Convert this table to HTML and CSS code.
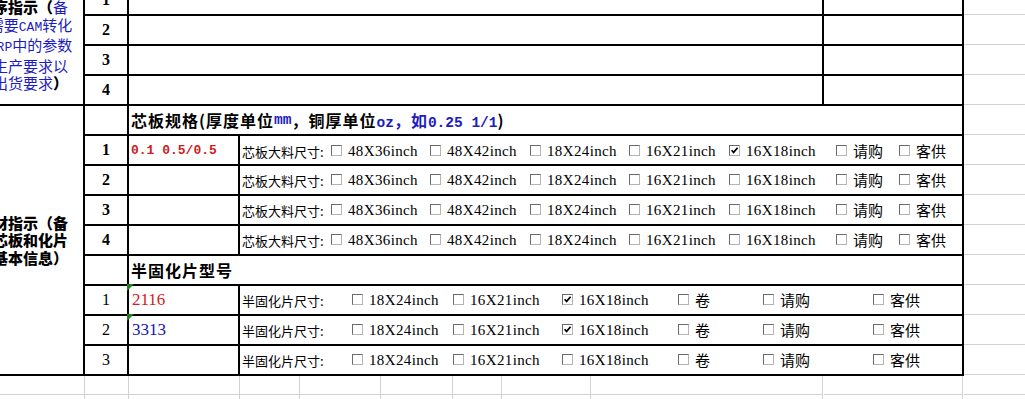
FILE: index.html
```html
<!DOCTYPE html>
<html lang="zh-CN">
<head>
<meta charset="utf-8">
<title>工序指示</title>
<link rel="stylesheet" href="styles.css">
</head>
<body>
<div class="sheet">
  <!-- rows 1-4 -->
  <div class="cell a a-top"><div class="note">
    <b>序指示（</b><span class="bl">备</span><br>
    <span class="bl">需要<span class="asc">CAM</span>转化</span><br>
    <span class="bl"><span class="asc">ERP</span>中的参数</span><br>
    <span class="bl">生产要求以</span><br>
    <span class="bl">出货要求</span><b>）</b>
  </div></div>
  <div class="cell num bold">1</div><div class="cell ci"></div><div class="cell"></div><div class="k"></div>
  <div class="cell num bold">2</div><div class="cell ci"></div><div class="cell"></div><div class="k"></div>
  <div class="cell num bold">3</div><div class="cell ci"></div><div class="cell"></div><div class="k"></div>
  <div class="cell num bold">4</div><div class="cell ci"></div><div class="cell"></div><div class="k"></div>

  <!-- core header -->
  <div class="cell a a-bot"><div class="note">
    <b>材指示（备</b><br>
    <b>芯板和化片</b><br>
    <b>基本信息）</b>
  </div></div>
  <div class="cell"></div>
  <div class="cell cj head">芯板规格(厚度单位<span class="mono bl">mm</span>，铜厚单位<span class="bl"><span class="mono">oz</span>，如<span class="mono">0.25 1/1</span></span>)</div>
  <div class="k"></div>

  <!-- core rows -->
  <div class="cell num bold">1</div>
  <div class="cell val thick">0.1 0.5/0.5</div>
  <div class="cell dj opts core first">
    <span class="lbl">芯板大料尺寸:</span>
    <span class="opt"><span class="cb"></span><span class="en">48X36inch</span></span>
    <span class="opt"><span class="cb"></span><span class="en">48X42inch</span></span>
    <span class="opt"><span class="cb"></span><span class="en">18X24inch</span></span>
    <span class="opt"><span class="cb"></span><span class="en">16X21inch</span></span>
    <span class="opt"><span class="cb"><svg viewBox="0 0 9 9" width="9" height="9"><path d="M1.6 4.2 L3.6 6.4 L7.6 1.8" fill="none" stroke="#000" stroke-width="1.7"/></svg></span><span class="en">16X18inch</span></span>
    <span class="opt"><span class="cb"></span><span>请购</span></span>
    <span class="opt"><span class="cb"></span><span>客供</span></span>
  </div>
  <div class="k"></div>

  <div class="cell num bold">2</div>
  <div class="cell"></div>
  <div class="cell dj opts core">
    <span class="lbl">芯板大料尺寸:</span>
    <span class="opt"><span class="cb"></span><span class="en">48X36inch</span></span>
    <span class="opt"><span class="cb"></span><span class="en">48X42inch</span></span>
    <span class="opt"><span class="cb"></span><span class="en">18X24inch</span></span>
    <span class="opt"><span class="cb"></span><span class="en">16X21inch</span></span>
    <span class="opt"><span class="cb"></span><span class="en">16X18inch</span></span>
    <span class="opt"><span class="cb"></span><span>请购</span></span>
    <span class="opt"><span class="cb"></span><span>客供</span></span>
  </div>
  <div class="k"></div>

  <div class="cell num bold">3</div>
  <div class="cell"></div>
  <div class="cell dj opts core">
    <span class="lbl">芯板大料尺寸:</span>
    <span class="opt"><span class="cb"></span><span class="en">48X36inch</span></span>
    <span class="opt"><span class="cb"></span><span class="en">48X42inch</span></span>
    <span class="opt"><span class="cb"></span><span class="en">18X24inch</span></span>
    <span class="opt"><span class="cb"></span><span class="en">16X21inch</span></span>
    <span class="opt"><span class="cb"></span><span class="en">16X18inch</span></span>
    <span class="opt"><span class="cb"></span><span>请购</span></span>
    <span class="opt"><span class="cb"></span><span>客供</span></span>
  </div>
  <div class="k"></div>

  <div class="cell num bold">4</div>
  <div class="cell"></div>
  <div class="cell dj opts core">
    <span class="lbl">芯板大料尺寸:</span>
    <span class="opt"><span class="cb"></span><span class="en">48X36inch</span></span>
    <span class="opt"><span class="cb"></span><span class="en">48X42inch</span></span>
    <span class="opt"><span class="cb"></span><span class="en">18X24inch</span></span>
    <span class="opt"><span class="cb"></span><span class="en">16X21inch</span></span>
    <span class="opt"><span class="cb"></span><span class="en">16X18inch</span></span>
    <span class="opt"><span class="cb"></span><span>请购</span></span>
    <span class="opt"><span class="cb"></span><span>客供</span></span>
  </div>
  <div class="k"></div>

  <!-- prepreg header -->
  <div class="cell"></div>
  <div class="cell cj head">半固化片型号</div>
  <div class="k"></div>

  <!-- prepreg rows -->
  <div class="cell num">1</div>
  <div class="cell val serif red flag">2116</div>
  <div class="cell dj opts semi">
    <span class="lbl">半固化片尺寸:</span>
    <span class="opt"><span class="cb"></span><span class="en">18X24inch</span></span>
    <span class="opt"><span class="cb"></span><span class="en">16X21inch</span></span>
    <span class="opt"><span class="cb"><svg viewBox="0 0 9 9" width="9" height="9"><path d="M1.6 4.2 L3.6 6.4 L7.6 1.8" fill="none" stroke="#000" stroke-width="1.7"/></svg></span><span class="en">16X18inch</span></span>
    <span class="opt"><span class="cb"></span><span>卷</span></span>
    <span class="opt"><span class="cb"></span><span>请购</span></span>
    <span class="opt"><span class="cb"></span><span>客供</span></span>
  </div>
  <div class="k"></div>

  <div class="cell num">2</div>
  <div class="cell val serif blue flag">3313</div>
  <div class="cell dj opts semi">
    <span class="lbl">半固化片尺寸:</span>
    <span class="opt"><span class="cb"></span><span class="en">18X24inch</span></span>
    <span class="opt"><span class="cb"></span><span class="en">16X21inch</span></span>
    <span class="opt"><span class="cb"><svg viewBox="0 0 9 9" width="9" height="9"><path d="M1.6 4.2 L3.6 6.4 L7.6 1.8" fill="none" stroke="#000" stroke-width="1.7"/></svg></span><span class="en">16X18inch</span></span>
    <span class="opt"><span class="cb"></span><span>卷</span></span>
    <span class="opt"><span class="cb"></span><span>请购</span></span>
    <span class="opt"><span class="cb"></span><span>客供</span></span>
  </div>
  <div class="k"></div>

  <div class="cell num">3</div>
  <div class="cell"></div>
  <div class="cell dj opts semi">
    <span class="lbl">半固化片尺寸:</span>
    <span class="opt"><span class="cb"></span><span class="en">18X24inch</span></span>
    <span class="opt"><span class="cb"></span><span class="en">16X21inch</span></span>
    <span class="opt"><span class="cb"></span><span class="en">16X18inch</span></span>
    <span class="opt"><span class="cb"></span><span>卷</span></span>
    <span class="opt"><span class="cb"></span><span>请购</span></span>
    <span class="opt"><span class="cb"></span><span>客供</span></span>
  </div>
  <div class="k"></div>

  <!-- empty grid rows -->
  <div class="g"></div><div class="g"></div><div class="g"></div><div class="g"></div><div class="g"></div><div class="g"></div><div class="g"></div><div class="g"></div><div class="g mr"></div><div class="g mr"></div><div class="g gk"></div>
  <div class="g"></div><div class="g"></div><div class="g"></div><div class="g"></div><div class="g"></div><div class="g"></div><div class="g"></div><div class="g"></div><div class="g mr"></div><div class="g mr"></div><div class="g gk"></div>
</div>
</body>
</html>
```

FILE: styles.css
```css
* { box-sizing: border-box; }

html, body {
  margin: 0;
  padding: 0;
  overflow: hidden;
  background: #fff;
}

body {
  font-family: "Noto Sans CJK SC", sans-serif;
  color: #000;
}

.sheet {
  display: grid;
  grid-template-columns: 107px 44px 111px 60px 81px 72px 49px 89px 233px 140px 200px;
  grid-template-rows: repeat(13, 30px) 19px 20px;
  margin: -14px 0 0 -22px;
  width: max-content;
}

.cell {
  border-right: 2px solid #000;
  border-bottom: 2px solid #000;
  min-width: 0;
}

.k {
  border-bottom: 1px solid #d2d2d2;
  margin-bottom: 1px;
}

.g {
  border-right: 1px solid #d2d2d2;
  border-bottom: 1px solid #d2d2d2;
}
.g.mr { margin-right: 1px; }
.g.gk { border-right: 0; }

/* merged areas */
.a {
  display: flex;
  align-items: center;
  justify-content: center;
  text-align: center;
  white-space: nowrap;
  font-size: 15px;
  line-height: 17.5px;
  font-weight: 700;
}
.a-top { grid-row: span 4; }
.a-bot { grid-row: span 9; }
.ci { grid-column: span 7; }
.cj { grid-column: span 8; }
.dj { grid-column: span 7; }

.bl { color: #1c1cc0; }
.a .bl { font-weight: 400; }
.asc {
  font-family: "Liberation Mono", monospace;
  font-size: 13px;
}

.num {
  display: flex;
  align-items: center;
  justify-content: center;
  font-family: "Liberation Serif", serif;
  font-size: 16px;
}
.num.bold { font-weight: 700; }

.head {
  display: flex;
  align-items: center;
  padding-left: 2px;
  font-size: 16px;
  font-weight: 700;
  letter-spacing: 1px;
  white-space: nowrap;
}
.mono {
  font-family: "Liberation Mono", monospace;
  font-size: 14.5px;
  letter-spacing: 0;
}

.val {
  display: flex;
  align-items: center;
  padding-left: 2px;
  white-space: pre;
  position: relative;
}
.val.thick {
  font-family: "Liberation Mono", monospace;
  font-weight: 700;
  font-size: 13px;
  color: #cc2020;
}
.val.serif {
  font-family: "Liberation Serif", serif;
  font-size: 17px;
  padding-left: 3px;
}
.red { color: #d41c1c; }
.blue { color: #1414b4; }
.flag::before {
  content: "";
  position: absolute;
  left: -2px;
  top: -2px;
  z-index: 1;
  border-top: 7px solid #1d7f1d;
  border-right: 7px solid transparent;
}

/* option rows */
.opts {
  display: grid;
  align-items: center;
  padding-left: 2px;
}
.opts.first { padding-top: 2px; }
.core { grid-template-columns: 89px 99px 100px 99px 100px 107px 63px auto; }
.semi { grid-template-columns: 110px 101px 109px 116px 85px 110px auto; }

.lbl {
  font-size: 13px;
  white-space: nowrap;
}
.opt {
  display: flex;
  align-items: center;
  white-space: nowrap;
  font-size: 15px;
  line-height: 20px;
}
.en {
  font-family: "Liberation Serif", serif;
  letter-spacing: 0.37px;
}
.cb {
  flex: none;
  display: flex;
  align-items: center;
  justify-content: center;
  width: 11px;
  height: 11px;
  margin-right: 6px;
  margin-bottom: 2px;
  border: 1px solid;
  border-color: #6a6a6a #b4b4b4 #b4b4b4 #6a6a6a;
  background: #fff;
}
.cb svg { display: block; }
```
